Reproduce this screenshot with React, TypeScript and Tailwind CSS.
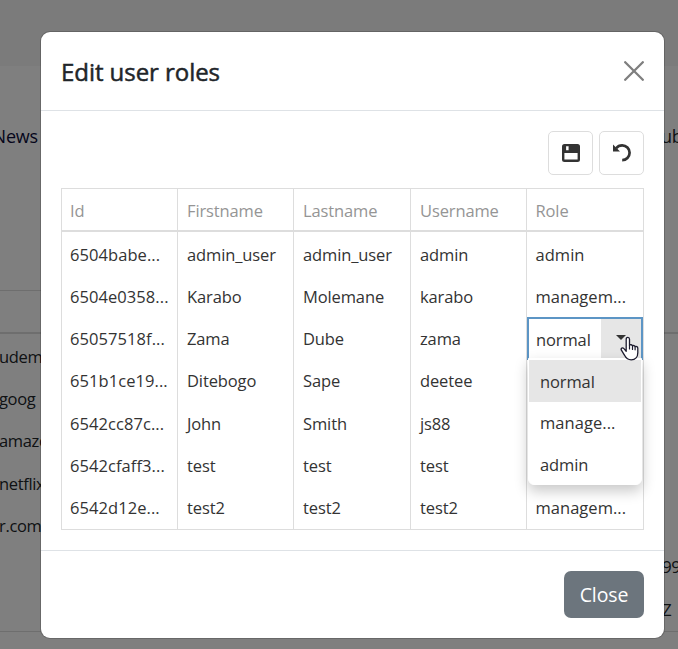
import React from 'react';

type User = { id: string; first: string; last: string; username: string; role: string };

const users: User[] = [
  { id: '6504babe...', first: 'admin_user', last: 'admin_user', username: 'admin', role: 'admin' },
  { id: '6504e0358...', first: 'Karabo', last: 'Molemane', username: 'karabo', role: 'managem...' },
  { id: '65057518f...', first: 'Zama', last: 'Dube', username: 'zama', role: 'normal' },
  { id: '651b1ce19...', first: 'Ditebogo', last: 'Sape', username: 'deetee', role: '' },
  { id: '6542cc87c...', first: 'John', last: 'Smith', username: 'js88', role: '' },
  { id: '6542cfaff3...', first: 'test', last: 'test', username: 'test', role: '' },
  { id: '6542d12e...', first: 'test2', last: 'test2', username: 'test2', role: 'managem...' },
];

const headers = ['Id', 'Firstname', 'Lastname', 'Username', 'Role'];
const sites = ['udem', 'goog', 'amazo', 'netflix', 'r.com'];

function Page() {
  return (
    <div className="h-full bg-white text-[17px] text-[#212529]">
      <div className="h-[66px] bg-[#f6f6f6]" />
      <div className="flex h-[224px] justify-between pt-[56px] text-[18px] leading-7 tracking-[-0.2px]">
        <div className="flex w-[38px] justify-end overflow-hidden text-[#0b0b38]">News</div>
        <div className="w-[17px] overflow-hidden text-[#212529]">ub</div>
      </div>
      <div className="flex h-[341px] justify-between">
        <div className="w-[50px] border-t border-[#ddd]">
          <div className="h-[43px] border-b-2 border-[#ddd]" />
          <div className="-ml-px pt-[2px]">
            {sites.map((s) => (
              <div key={s} className="h-[42.2px] text-[16.5px] leading-[42px] tracking-[-0.35px]">{s}</div>
            ))}
          </div>
        </div>
        <div className="w-[16px] overflow-hidden">
          <div className="h-[44px] border-b-2 border-[#ddd]" />
          <div className="pt-[211px] text-[17px] leading-[43px]">
            <div className="tracking-[-0.4px]">99</div>
            <div>Z</div>
          </div>
        </div>
      </div>
      <div className="border-t border-[#ddd]" />
    </div>
  );
}

function SaveIcon() {
  return (
    <svg width="18" height="18" viewBox="0 0 18 18" fill="#333">
      <path
        fillRule="evenodd"
        d="M2.5 0h13a2.5 2.5 0 0 1 2.5 2.5v13a2.5 2.5 0 0 1-2.5 2.5h-13a2.5 2.5 0 0 1-2.5-2.5v-13a2.5 2.5 0 0 1 2.5-2.5ZM4.1 2.2v4h2.5v-4H4.1ZM2.4 9.1v6.4h13.2V9.1H2.4Z"
      />
    </svg>
  );
}

function RevertIcon() {
  return (
    <svg width="20" height="20" viewBox="0 0 20 20">
      <path d="M4.2 5.2C5.7 3.2 7.8 2.3 10.2 2.3a7.3 7.3 0 0 1 0 14.8" fill="none" stroke="#333" strokeWidth="2.7" />
      <path d="M1 1.6V8.4H8Z" fill="#333" />
    </svg>
  );
}

function HandCursor() {
  return (
    <svg className="absolute left-[91px] top-[17px] z-20" width="19" height="26" viewBox="0 0 19 26">
      <path
        d="M6.2 15.2V3.2c0-2.5 3.3-2.5 3.3 0v6.1c.8-1 2.6-.7 3 .6.9-.8 2.3-.4 2.6.8 1-.6 2.7 0 2.7 1.5v4.6c0 4-2.4 7-6.6 7-3.2 0-5-1.4-6.3-4l-3.5-5.6c-1-1.9 1.2-3 2.5-1.6Z"
        fill="#fff"
        stroke="#1c1b2e"
        strokeWidth="1.3"
        strokeLinejoin="round"
      />
      <path d="M9.5 9v4M12.5 10v3.5M15.1 10.8v3" fill="none" stroke="#1c1b2e" strokeWidth="1.2" strokeLinecap="round" />
    </svg>
  );
}

function RoleEditor() {
  return (
    <div className="relative mt-px h-[43px] w-[116px] border-2 border-[#5c95c5] bg-white">
      <div className="flex h-full">
        <div className="flex-1 pl-[7px] leading-[41px]">normal</div>
        <div className="flex w-[40px] justify-center bg-[#e6e6e6] pt-[16px]">
          <svg width="10" height="5" viewBox="0 0 10 5">
            <path d="M0 0h10L5 5Z" fill="#333" />
          </svg>
        </div>
      </div>
      <ul className="absolute left-[-1px] top-[39px] z-10 h-[127px] w-[114px] overflow-hidden rounded-b-[6px] border border-white bg-white shadow-[0_6px_14px_rgba(0,0,0,0.22)]">
        <li className="mt-px h-[42px] bg-[#e6e6e6] pl-[11px] leading-[43px]">normal</li>
        <li className="h-[42px] pl-[11px] leading-[42px] tracking-[0.05px]">manage...</li>
        <li className="h-[42px] pl-[11px] leading-[41px]">admin</li>
      </ul>
      <HandCursor />
    </div>
  );
}

function Grid() {
  const cell = 'border-l border-[#ddd] pl-[9px] first:pl-[8px] last:pl-[8.5px]';
  const columns = 'grid grid-cols-[116px_116px_117px_116px_117px]';
  return (
    <div className="h-[342px] w-[583px] border-b border-r border-t border-[#ddd] text-[16.5px] tracking-[-0.12px] text-[#333]">
      <div className={`${columns} h-[43px] border-b-2 border-[#ddd] leading-[43px] text-[#959595]`}>
        {headers.map((h) => (
          <div key={h} className={cell}>{h}</div>
        ))}
      </div>
      {users.map((u, i) => (
        <div key={u.id} className={`${columns} h-[42.15px] leading-[45px]`}>
          <div className={`${cell} tracking-[0.07px]`}>{u.id}</div>
          <div className={cell}>{u.first}</div>
          <div className={cell}>{u.last}</div>
          <div className={cell}>{u.username}</div>
          {i === 2 ? (
            <div className="border-l border-[#ddd]">
              <RoleEditor />
            </div>
          ) : (
            <div className={`${cell} tracking-[0.03px]`}>{u.role}</div>
          )}
        </div>
      ))}
    </div>
  );
}

export default function App() {
  return (
    <div className="relative h-[649px] w-[678px] overflow-hidden font-['Open_Sans','Noto_Sans',sans-serif]">
      <Page />
      <div className="absolute inset-0 bg-black/50 pl-[41px] pt-[32px]">
        <div className="flex h-[606px] w-[623px] flex-col rounded-[9px] bg-white shadow-[0_0_0_1px_rgba(0,0,0,0.18)]">
          <header className="flex h-[79px] shrink-0 items-center justify-between border-b border-[#dee2e6] px-5">
            <h1 className="pt-[2px] text-[24px] font-medium leading-8 tracking-[-0.05px] text-[#212529] [-webkit-text-stroke:0.5px_#212529]">Edit user roles</h1>
            <svg width="20" height="20" viewBox="0 0 20 20" stroke="#7f7f7f" strokeWidth="2.3" strokeLinecap="round">
              <path d="M1.2 1.2 18.8 18.8M18.8 1.2 1.2 18.8" />
            </svg>
          </header>
          <main className="flex-1 px-5 pt-5">
            <div className="mb-[13px] flex justify-end gap-[6px]">
              <button className="flex h-[44px] w-[45px] items-center justify-center rounded-[5px] border border-[#ddd]">
                <SaveIcon />
              </button>
              <button className="flex h-[44px] w-[45px] items-center justify-center rounded-[5px] border border-[#ddd]">
                <RevertIcon />
              </button>
            </div>
            <Grid />
          </main>
          <footer className="flex h-[88px] shrink-0 justify-end border-t border-[#dee2e6] px-5 pt-5">
            <button className="h-[47px] w-[80px] rounded-[7px] bg-[#6c757d] pt-px text-[19.5px] tracking-[-0.1px] text-white">Close</button>
          </footer>
        </div>
      </div>
    </div>
  );
}
